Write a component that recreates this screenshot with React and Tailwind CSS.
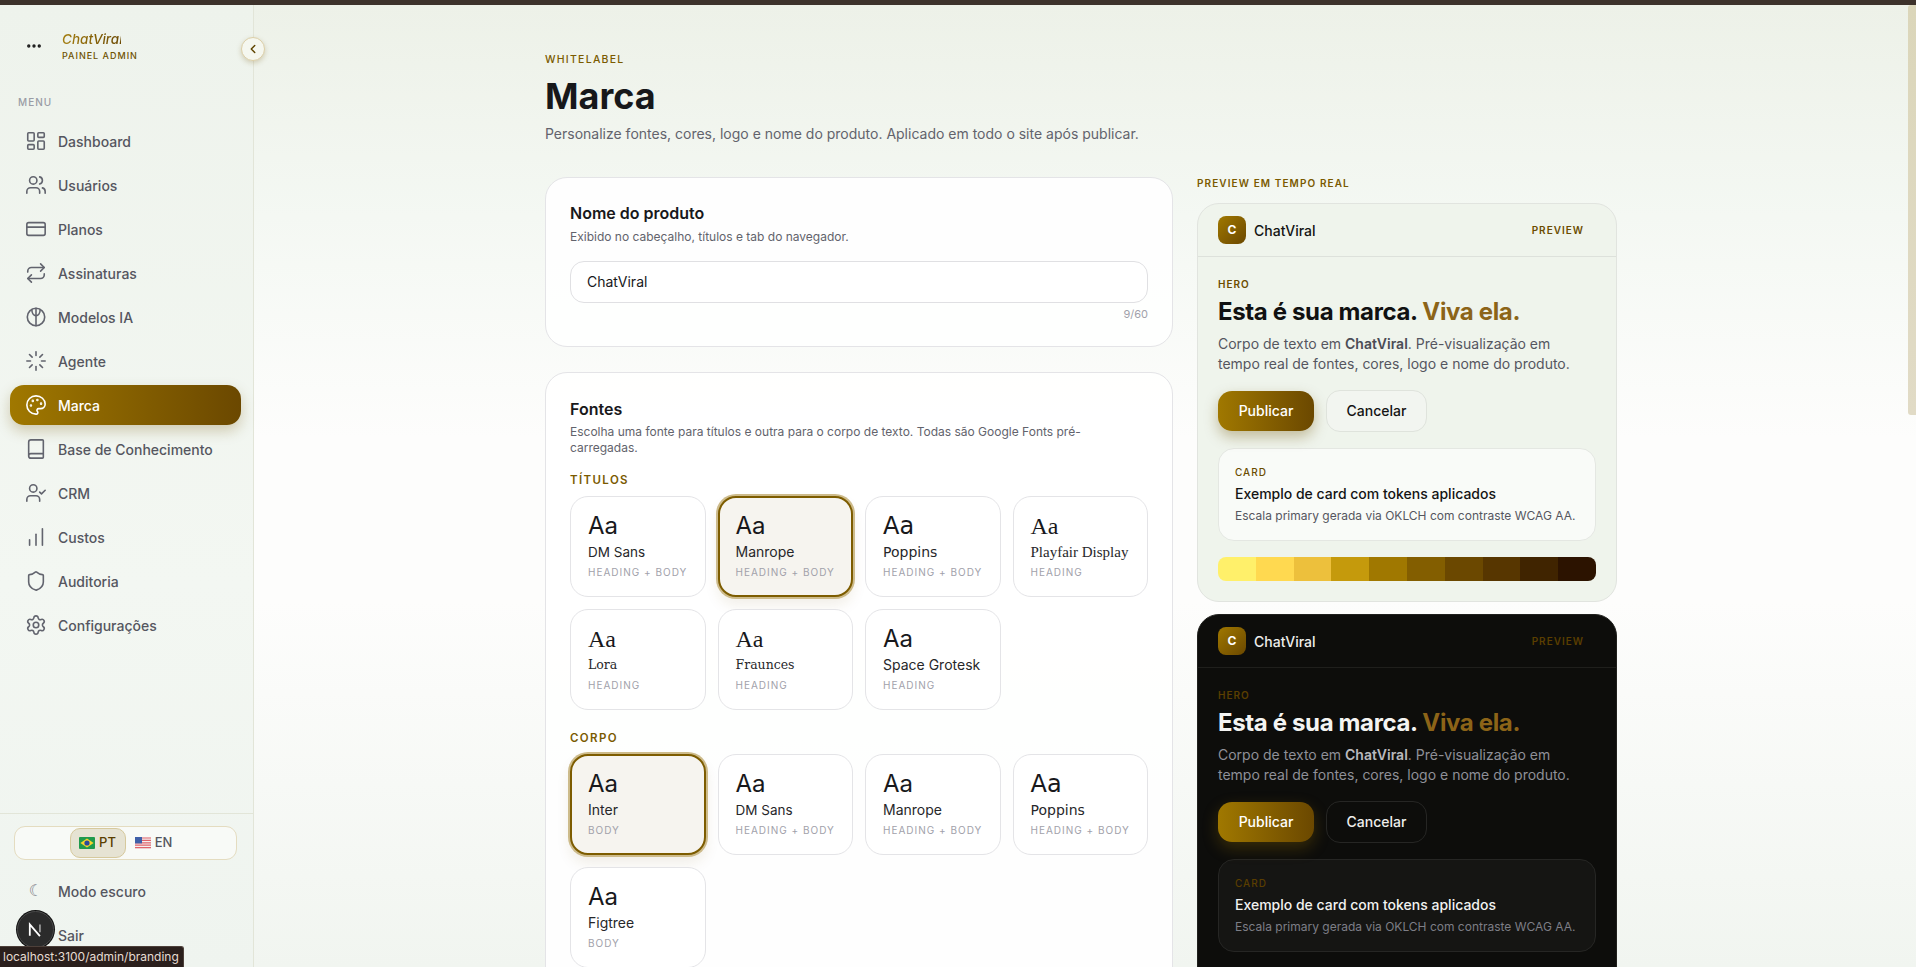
import React from 'react';
import {
  LayoutDashboard, Users, CreditCard, Repeat, Loader, Palette, Book, UserCheck,
  ChartNoAxesColumnIncreasing, Shield, Settings, ChevronLeft, Ellipsis, LogOut,
} from 'lucide-react';

// Custom glyph for "Modelos IA", nothing in lucide has the same strokes
function ModelsIcon({ size = 22 }) {
  return (
    <svg width={size} height={size} viewBox="0 0 24 24" fill="none" stroke="currentColor" strokeWidth="1.75" strokeLinecap="round" strokeLinejoin="round">
      <circle cx="12" cy="12" r="9.5" />
      <path d="M12 2.5v19" />
      <path d="M7.5 4c0 4 2 6.5 4.5 6.5S16.5 8 16.5 4" />
    </svg>
  );
}

function BrazilFlag() {
  return (
    <svg width="16" height="12" viewBox="0 0 16 12">
      <rect width="16" height="12" rx="1" fill="#1f9a4d" />
      <path d="M8 1.4 14.6 6 8 10.6 1.4 6z" fill="#f6d32d" />
      <circle cx="8" cy="6" r="2.6" fill="#2a4a9c" />
    </svg>
  );
}

function UsFlag() {
  return (
    <svg width="16" height="12" viewBox="0 0 16 12">
      <rect width="16" height="12" rx="1" fill="#f4f0f0" />
      <path d="M0 1h16M0 3.4h16M0 5.8h16M0 8.2h16M0 10.6h16" stroke="#e0636b" strokeWidth="1.2" />
      <rect width="7" height="6.4" fill="#3f5fa8" />
    </svg>
  );
}

const navItems = [
  { label: 'Dashboard', icon: LayoutDashboard },
  { label: 'Usuários', icon: Users },
  { label: 'Planos', icon: CreditCard },
  { label: 'Assinaturas', icon: Repeat },
  { label: 'Modelos IA', icon: ModelsIcon },
  { label: 'Agente', icon: Loader },
  { label: 'Marca', icon: Palette, active: true },
  { label: 'Base de Conhecimento', icon: Book },
  { label: 'CRM', icon: UserCheck },
  { label: 'Custos', icon: ChartNoAxesColumnIncreasing },
  { label: 'Auditoria', icon: Shield },
  { label: 'Configurações', icon: Settings },
];

const SANS = '[font-family:Inter,sans-serif]';
const WIDE = "[font-family:'DejaVu_Sans',sans-serif]";
const SERIF = "[font-family:'Liberation_Serif',serif]";
const SLAB = "[font-family:'DejaVu_Serif',serif]";

const headingFonts = [
  { name: 'DM Sans', meta: 'HEADING + BODY', font: SANS, nameClass: 'text-[13.5px]' },
  { name: 'Manrope', meta: 'HEADING + BODY', font: SANS, nameClass: 'text-[14px]', selected: true },
  { name: 'Poppins', meta: 'HEADING + BODY', font: WIDE, nameClass: 'text-[14px]' },
  { name: 'Playfair Display', meta: 'HEADING', font: SERIF, nameClass: 'text-[15px]' },
  { name: 'Lora', meta: 'HEADING', font: SERIF, nameFont: SLAB, nameClass: 'text-[12.5px]' },
  { name: 'Fraunces', meta: 'HEADING', font: SERIF, nameFont: SLAB, nameClass: 'text-[12.5px]' },
  { name: 'Space Grotesk', meta: 'HEADING', font: SANS, nameClass: 'text-[14px]' },
];

const bodyFonts = [
  { name: 'Inter', meta: 'BODY', font: SANS, nameClass: 'text-[14px]', selected: true },
  { name: 'DM Sans', meta: 'HEADING + BODY', font: SANS, nameClass: 'text-[13.5px]' },
  { name: 'Manrope', meta: 'HEADING + BODY', font: SANS, nameClass: 'text-[14px]' },
  { name: 'Poppins', meta: 'HEADING + BODY', font: WIDE, nameClass: 'text-[14px]' },
  { name: 'Figtree', meta: 'BODY', font: SANS, nameClass: 'text-[14px]' },
];

const swatches = ['#fff06a', '#ffd950', '#edc03c', '#c59a0c', '#a07800', '#835e00', '#6b4800', '#573600', '#402400', '#2c1300'];

function Sidebar() {
  return (
    <aside className="relative flex h-full w-[254px] shrink-0 flex-col border-r border-[#e2e5d8] bg-[linear-gradient(180deg,#eef3ec_0%,#f3f7f2_60%,#eff4ef_100%)]">
      <div className="flex h-[80px] items-center pl-[25px] pt-[1px]">
        <Ellipsis size={18} strokeWidth={2.5} className="text-[#1b1b1b]" />
        <div className="ml-[19px]">
          <div className="w-[59px] overflow-hidden whitespace-nowrap bg-[linear-gradient(90deg,#a47e10,#6b4800)] bg-clip-text text-[13.5px] font-medium italic leading-[18px] text-transparent">ChatViral</div>
          <div className="mt-[1px] text-[9px] font-medium leading-[13px] tracking-[0.11em] text-[#6e5200]">PAINEL ADMIN</div>
        </div>
      </div>
      <button className="absolute -right-3 top-[32px] flex h-6 w-6 items-center justify-center rounded-full border border-[#dccfa8] bg-[#f5f7ef] text-[#5f4500] shadow-[0_2px_5px_rgba(120,90,20,0.25)]">
        <ChevronLeft size={14} strokeWidth={2.5} />
      </button>
      <div className="mt-[9px] pl-[18px] text-[10px] font-medium leading-[16px] tracking-[0.1em] text-[#9a9ca5]">MENU</div>
      <nav className="mt-[11px] flex flex-col gap-1 pl-[10px] pr-[12px]">
        {navItems.map((item) => {
          const Icon = item.icon;
          return (
            <a
              key={item.label}
              className={`flex h-10 items-center gap-[11px] rounded-[14px] pl-[15px] text-[14px] font-medium ${item.active ? 'bg-[linear-gradient(90deg,#a07800,#6b4800)] text-white shadow-[0_6px_14px_rgba(120,90,10,0.28)]' : 'text-[#555660]'}`}
            >
              <span className={`flex w-[22px] justify-center ${item.active ? 'text-white' : 'text-[#62646e]'}`}>
                <Icon size={22} strokeWidth={1.75} />
              </span>
              {item.label}
            </a>
          );
        })}
      </nav>
      <div className="mt-auto border-t border-[#e2e5d8] pl-[10px] pr-[12px] pt-[12px] pb-[12px]">
        <div className="mx-[4px] flex h-[34px] items-center justify-center rounded-[11px] border border-[#e4dcc0] bg-[#f8faf7]">
          <button className="flex h-[30px] w-[56px] items-center justify-center gap-[4px] rounded-[10px] border border-[#d6c99d] bg-[#e6e3d3] text-[13px] font-medium text-[#5a3e00]">
            <BrazilFlag /> PT
          </button>
          <button className="flex h-[30px] w-[56px] items-center justify-center gap-[4px] text-[13px] font-medium text-[#555660]">
            <UsFlag /> EN
          </button>
        </div>
        <a className="mt-[11px] flex h-10 items-center gap-[11px] pl-[15px] text-[14px] font-medium text-[#555660]">
          <span className="flex w-[22px] justify-center text-[16px] text-[#7d7f87] [font-family:'DejaVu_Sans',sans-serif]">☾</span>
          Modo escuro
        </a>
        <a className="mt-1 flex h-10 items-center gap-[11px] pl-[15px] text-[14px] font-medium text-[#555660]">
          <LogOut size={22} strokeWidth={1.75} className="text-[#62646e]" />
          Sair
        </a>
      </div>
    </aside>
  );
}

function FontCard({ font }) {
  return (
    <button
      className={`flex h-[101px] flex-col items-start justify-start whitespace-nowrap rounded-[18px] text-left ${font.selected ? 'border-2 border-[#7d5c00] bg-[#f6f4ef] px-[16px] pt-[12px] shadow-[0_0_0_2px_#cdbb8b,0_8px_14px_rgba(120,90,20,0.1)]' : 'border border-[#e4e4e7] bg-white px-[17px] pt-[13px]'}`}
    >
      <div className={`text-[24px] leading-[32px] text-[#18181b] ${font.font}`}>Aa</div>
      <div className={`leading-[20px] text-[#27272a] ${font.nameClass} ${font.nameFont || font.font}`}>{font.name}</div>
      <div className="mt-[3px] text-[10px] leading-[15px] tracking-[0.1em] text-[#a1a1aa]">{font.meta}</div>
    </button>
  );
}

function PreviewCard({ dark }) {
  const labelColor = dark ? 'text-[#5a3e00]' : 'text-[#6b4c00]';
  return (
    <div className={`overflow-hidden rounded-[22px] border ${dark ? 'border-[#20201d] bg-[#0d0d0b]' : 'border-[#e1e4df] bg-[#eff4ec]'}`}>
      <div className={`flex items-center justify-between border-b py-3 pl-5 pr-[32px] ${dark ? 'border-[#1f1f1c]' : 'border-[#dde1db]'}`}>
        <div className="flex items-center gap-2">
          <div className="flex h-7 w-7 items-center justify-center rounded-[8px] bg-[linear-gradient(135deg,#a07800,#6b4800)] text-[12px] font-bold text-white">C</div>
          <span className={`text-[14px] font-medium ${dark ? 'text-[#ededeb]' : 'text-[#141414]'}`}>ChatViral</span>
        </div>
        <span className={`text-[10px] font-semibold tracking-[0.1em] ${labelColor}`}>PREVIEW</span>
      </div>
      <div className="px-5 pb-5 pt-5">
        <div className={`text-[10px] font-semibold leading-[15px] tracking-[0.1em] ${labelColor}`}>HERO</div>
        <h2 className={`mt-1 text-[24px] font-bold leading-[32px] tracking-[-0.015em] ${dark ? 'text-[#f4f4f2]' : 'text-[#111]'}`}>
          Esta é sua marca. <span className="text-[#8c6418]">Viva ela.</span>
        </h2>
        <p className={`mt-[6px] text-[14px] leading-[20px] ${dark ? 'text-[#8f9098]' : 'text-[#55565f]'}`}>
          Corpo de texto em <b className={`font-semibold ${dark ? 'text-[#b9b9bd]' : 'text-[#4b4c55]'}`}>ChatViral</b>. Pré-visualização em tempo real de fontes, cores, logo e nome do produto.
        </p>
        <div className="mt-4 flex items-center gap-3">
          <button className={`h-10 w-[96px] rounded-[14px] bg-[linear-gradient(90deg,#a07800,#6b4800)] pb-px text-[14px] font-medium text-white ${dark ? 'shadow-[0_6px_16px_rgba(160,120,0,0.3)]' : 'shadow-[0_6px_14px_rgba(110,80,0,0.35)]'}`}>Publicar</button>
          <button className={`h-[42px] w-[101px] rounded-[14px] border pb-px text-[14px] font-medium ${dark ? 'border-[#262624] text-[#eeeeec]' : 'border-[#dfe3dc] bg-[#f2f5f0] text-[#141414]'}`}>Cancelar</button>
        </div>
        <div className={`mt-4 rounded-[16px] border p-4 ${dark ? 'border-[#262624] bg-[#151513]' : 'border-[#e4e7e2] bg-[#f9fbf8]'}`}>
          <div className={`text-[10px] font-medium leading-[15px] tracking-[0.1em] ${dark ? 'text-[#5a3e00]' : 'text-[#6b4c00]'}`}>CARD</div>
          <div className={`mt-1 text-[14px] font-medium leading-[20px] ${dark ? 'text-[#f2f2f0]' : 'text-[#141414]'}`}>Exemplo de card com tokens aplicados</div>
          <div className={`mt-1 whitespace-nowrap text-[12px] leading-[16px] ${dark ? 'text-[#7d7e86]' : 'text-[#55565f]'}`}>Escala primary gerada via OKLCH com contraste WCAG AA.</div>
        </div>
        <div className="mt-4 grid h-6 grid-cols-10 overflow-hidden rounded-[8px]">
          {swatches.map((c) => (
            <div key={c} style={{ backgroundColor: c }} />
          ))}
        </div>
      </div>
    </div>
  );
}

export default function App() {
  return (
    <div className="relative flex h-[967px] w-full flex-col overflow-hidden bg-white text-[#18181b] [font-family:Inter,sans-serif]">
      <div className="h-[5px] shrink-0 bg-[#3d322b]" />
      <div className="flex min-h-0 flex-1 bg-[linear-gradient(180deg,#edf1e8_0%,#f4f8f3_22%,#fdfdfc_45%,#fdfdfc_62%,#f1f5f0_100%)]">
        <Sidebar />
        <main className="min-w-0 flex-1 overflow-hidden pr-2">
          <div className="mx-auto w-[1152px] px-10 pt-[47px]">
            <div className="text-[10.5px] font-medium leading-[16px] tracking-[0.12em] text-[#7a5a00]">WHITELABEL</div>
            <h1 className="mt-2 text-[36px] font-bold leading-[40px] text-[#17181a]">Marca</h1>
            <p className="mt-2 text-[14px] leading-[20px] text-[#62636c]">Personalize fontes, cores, logo e nome do produto. Aplicado em todo o site após publicar.</p>

            <div className="mt-[33px] grid grid-cols-[1fr_420px] gap-6">
              <div className="flex flex-col gap-[25px]">
                <section className="rounded-[22px] border border-[#e4e4e7] bg-white/90 p-6 pt-[23px]">
                  <h3 className="text-[16px] font-semibold leading-[24px] text-[#18181b]">Nome do produto</h3>
                  <p className="mt-[4px] text-[12px] leading-[16px] text-[#62636c]">Exibido no cabeçalho, títulos e tab do navegador.</p>
                  <div className="mt-4 flex h-[42px] items-center rounded-[14px] border border-[#e0e0e3] bg-white px-4 pb-px text-[14px] text-[#18181b]">ChatViral</div>
                  <div className="mt-[3px] text-right text-[11px] leading-[16px] text-[#a1a1aa]">9/60</div>
                </section>

                <section className="rounded-[22px] border border-[#e4e4e7] bg-white/90 p-6">
                  <h3 className="text-[16px] font-semibold leading-[24px] text-[#18181b]">Fontes</h3>
                  <p className="mt-[3px] text-[12px] leading-[16px] text-[#62636c]">Escolha uma fonte para títulos e outra para o corpo de texto. Todas são Google Fonts pré-carregadas.</p>
                  <div className="mt-[16px] mb-[8px] text-[11.5px] font-semibold leading-[16px] tracking-[0.12em] text-[#7a5a00]">TÍTULOS</div>
                  <div className="grid grid-cols-4 gap-3">
                    {headingFonts.map((f) => <FontCard key={f.name} font={f} />)}
                  </div>
                  <div className="mt-[20px] mb-[8px] text-[11.5px] font-semibold leading-[16px] tracking-[0.12em] text-[#7a5a00]">CORPO</div>
                  <div className="grid grid-cols-4 gap-3">
                    {bodyFonts.map((f) => <FontCard key={f.name} font={f} />)}
                  </div>
                </section>
              </div>

              <div className="-mt-px">
                <div className="mb-[13px] text-[10px] font-semibold leading-[14px] tracking-[0.11em] text-[#7a5a00]">PREVIEW EM TEMPO REAL</div>
                <div className="flex flex-col gap-3">
                  <PreviewCard />
                  <PreviewCard dark />
                </div>
              </div>
            </div>
          </div>
        </main>
      </div>

      {/* scrollbar thumb */}
      <div className="absolute right-0 top-[5px] h-[410px] w-2 rounded-l-[3px] bg-[linear-gradient(180deg,#dbd6ba,#e1dbc6)]" />

      {/* next dev badge */}
      <div className="absolute left-[17px] top-[911px] flex h-[37px] w-[37px] items-center justify-center rounded-full border border-[#4a4a4a] bg-[#2b2b2b] shadow-[0_0_0_1px_#111]">
        <svg width="18" height="18" viewBox="0 0 16 16" fill="none">
          <path d="M2.5 13V3l9 10.5" stroke="#fff" strokeWidth="1.6" />
          <path d="M11.5 3v7" stroke="#aaa" strokeWidth="1.4" />
        </svg>
      </div>

      {/* browser status bubble */}
      <div className="absolute bottom-0 left-0 flex h-[21px] w-[184px] items-center rounded-tr-[3px] border-r border-t border-[#4d403a] bg-[#2a1f1c] pl-[3px] text-[12px] text-[#e6dcd3]">localhost:3100/admin/branding</div>
    </div>
  );
}
